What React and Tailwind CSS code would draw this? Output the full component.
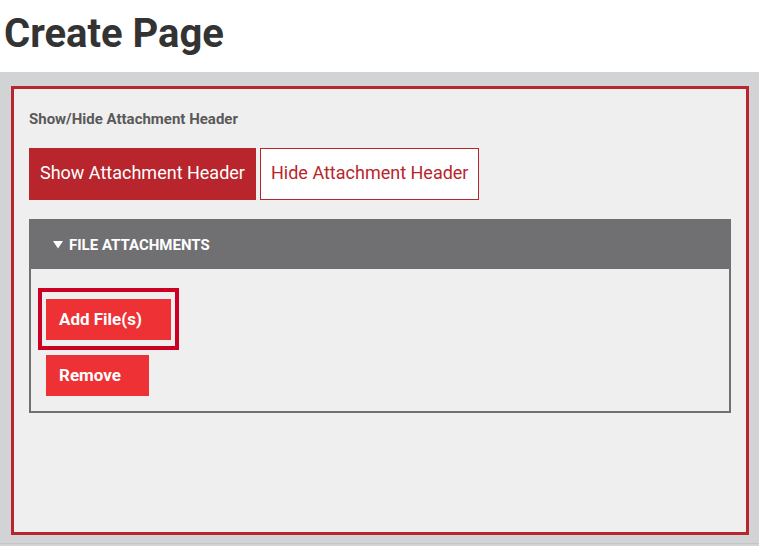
export default function App() {
  return (
    <div className="w-[759px] h-[546px] overflow-hidden bg-white font-['Roboto',sans-serif]">
      <div className="h-[72px] pl-[4px] pt-[10px]">
        <h1 className="text-[40px] leading-[48px] font-bold text-[#333333]">Create Page</h1>
      </div>
      <div className="bg-[#d2d3d5] pt-[14px] pl-[11px] pr-[10px] pb-[8px] border-b border-[#c4c5c7]">
        <div className="h-[449px] border-[3px] border-[#b8252c] bg-[#efefef] pl-[15px] pr-[15px] pt-[20px]">
          <div className="text-[15px] leading-[20px] font-bold text-[#5a5a5a]">Show/Hide Attachment Header</div>
          <div className="mt-[19px] flex gap-[4px]">
            <button className="h-[52px] w-[227px] bg-[#b8252c] text-white text-[18px] text-left pl-[11px] pb-[4px]">Show Attachment Header</button>
            <button className="h-[52px] w-[219px] bg-white border border-[#b8252c] text-[#b8252c] text-[18px] text-left pl-[10px] pb-[4px]">Hide Attachment Header</button>
          </div>
          <div className="mt-[19px] border-2 border-[#707073] w-[702px]">
            <div className="h-[48px] bg-[#707073] flex items-center pl-[22px]">
              <svg width="10" height="8" viewBox="0 0 10 8" className="mr-[6px]">
                <polygon points="0,0 10,0 5,7.5" fill="#ffffff" />
              </svg>
              <span className="text-white text-[15px] font-bold leading-[20px]">FILE ATTACHMENTS</span>
            </div>
            <div className="pt-[19px] pl-[7px] pb-[15px]">
              <div className="inline-block border-4 border-[#cc0022] pt-[7px] pb-[6px] px-[4px] align-top">
                <button className="block h-[41px] w-[125px] bg-[#ee3134] text-white text-[17px] font-bold text-left pl-[13px]">Add File(s)</button>
              </div>
              <div className="pl-[8px] mt-[5px]">
                <button className="block h-[41px] w-[103px] bg-[#ee3134] text-white text-[17px] font-bold text-left pl-[13px]">Remove</button>
              </div>
            </div>
          </div>
        </div>
      </div>
      <div className="h-[2px] bg-[#d2d3d5]"></div>
    </div>
  );
}
